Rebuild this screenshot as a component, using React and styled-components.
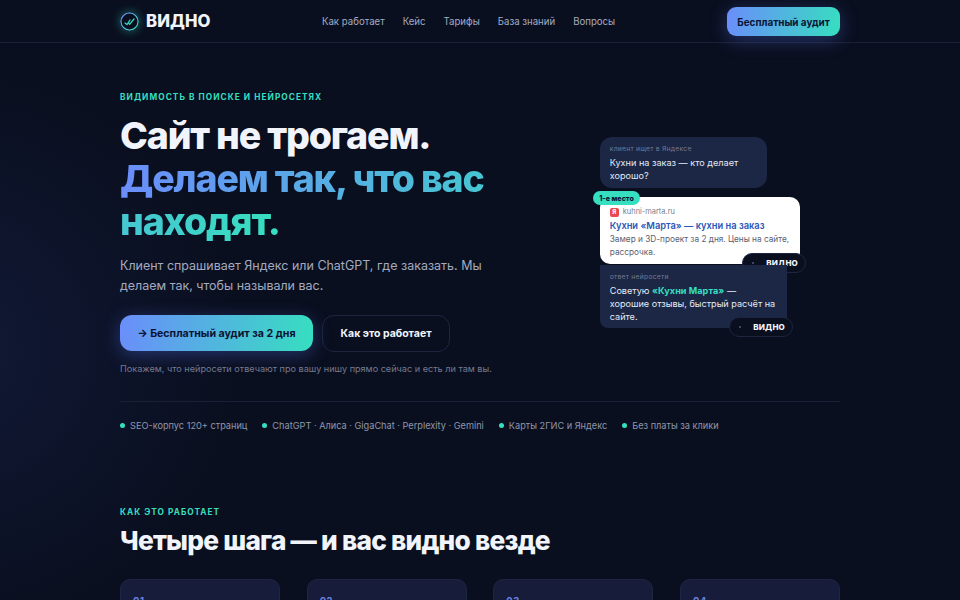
import React from 'react'
import styled, { createGlobalStyle } from 'styled-components'

const navLinks = ['Как работает', 'Кейс', 'Тарифы', 'База знаний', 'Вопросы']
const facts = ['SEO-корпус 120+ страниц', 'ChatGPT · Алиса · GigaChat · Perplexity · Gemini', 'Карты 2ГИС и Яндекс', 'Без платы за клики']
const steps = ['01', '02', '03', '04']

const Global = createGlobalStyle`
  html, body { margin: 0; height: 600px; overflow: hidden; background: #0a0f1f; }
  body { font-family: Inter, "Noto Sans", sans-serif; color: #f1f4fb; }
  * { box-sizing: border-box; }
`

const Page = styled.div`
  height: 600px;
  overflow: hidden;
  background:
    radial-gradient(300px 280px at -60px 350px, rgba(60, 90, 200, 0.14), transparent 100%),
    #0a0f1f;
`
const Wrap = styled.div`
  width: 720px;
  margin: 0 auto;
`
const HeaderBar = styled.header`
  height: 43px;
  border-bottom: 1px solid #1a2036;
`
const HeaderRow = styled(Wrap)`
  height: 42px;
  display: flex;
  align-items: center;
`
const Logo = styled.div`
  display: flex;
  align-items: center;
  gap: 7px;
  font-size: 16.7px;
  font-weight: 800;
  letter-spacing: 0.1px;
  width: 202px;
`
const LogoMark = styled.svg`
  width: 19px;
  height: 19px;
  border-radius: 50%;
  box-shadow: 0 0 10px rgba(52, 222, 195, 0.45);
`
const Nav = styled.nav`
  display: flex;
  gap: 18px;
  flex: 1;
`
const NavLink = styled.a`
  font-size: 9.65px;
  color: #a4abc0;
`
const PrimaryButton = styled.a`
  display: flex;
  align-items: center;
  justify-content: center;
  border-radius: ${p => (p.$large ? '12px' : '9px')};
  width: ${p => (p.$large ? '193px' : '113px')};
  height: ${p => (p.$large ? '36px' : '29px')};
  margin-top: ${p => (p.$large ? '0' : '1px')};
  font-size: ${p => (p.$large ? '10.65px' : '9.9px')};
  font-weight: 700;
  color: #0b1435;
  background: linear-gradient(100deg, #6b8dfb, #36dfc0);
  box-shadow: 0 4px 18px rgba(90, 120, 250, 0.35);
`
const Hero = styled(Wrap)`
  display: grid;
  grid-template-columns: 480px 240px;
  padding-top: 48px;
`
const Eyebrow = styled.div`
  padding-top: 1px;
  font-size: 8.25px;
  line-height: 11px;
  font-weight: 700;
  letter-spacing: 1.07px;
  color: #36dfc0;
`
const Title = styled.h1`
  margin: 10.5px 0 0;
  font-size: 37.5px;
  line-height: 43.1px;
  font-weight: 800;
  letter-spacing: -1.15px;
`
const GradientText = styled.span`
  background: linear-gradient(90deg, #6b8dfb, #36dfc0);
  -webkit-background-clip: text;
  background-clip: text;
  color: transparent;
`
const Lead = styled.p`
  margin: 13px 0 0;
  width: 380px;
  font-size: 12.47px;
  line-height: 20.4px;
  color: #a4abc0;
`
const Actions = styled.div`
  display: flex;
  gap: 9px;
  margin-top: 18.5px;
`
const GhostButton = styled.a`
  display: flex;
  align-items: center;
  justify-content: center;
  width: 128px;
  height: 37px;
  border: 1px solid #1e2540;
  border-radius: 12px;
  font-size: 10.5px;
  font-weight: 700;
  color: #f1f4fb;
`
const Note = styled.p`
  margin: 10px 0 0;
  font-size: 9.12px;
  line-height: 13px;
  color: #747b92;
`
const Visual = styled.div`
  display: flex;
  flex-direction: column;
  align-items: flex-start;
  padding-top: 46px;
`
const Bubble = styled.div`
  position: relative;
  background: #1b2745;
  border-radius: ${p => (p.$answer ? '0 0 8px 8px' : '12px')};
  width: ${p => (p.$answer ? '187px' : '167px')};
  height: ${p => (p.$answer ? '63px' : '51px')};
  padding: 7px 9.75px 0;
  margin-top: ${p => (p.$answer ? '1px' : '0')};
`
const BubbleLabel = styled.div`
  font-size: 6.75px;
  line-height: 10px;
  letter-spacing: 0.25px;
  color: #717a94;
`
const BubbleText = styled.div`
  margin-top: 2px;
  font-size: 9.1px;
  line-height: 13.1px;
  color: #e6eaf4;
`
const Accent = styled.b`
  color: #36dfc0;
  font-weight: 700;
  letter-spacing: 0.05px;
`
const ResultCard = styled.div`
  position: relative;
  width: 200px;
  height: 67px;
  margin-top: 9px;
  padding: 10px 9.75px 0;
  background: #fff;
  border-radius: 10px;
`
const PlaceBadge = styled.div`
  position: absolute;
  top: -6px;
  left: -7px;
  width: 47px;
  height: 14px;
  display: flex;
  align-items: center;
  justify-content: center;
  border-radius: 7px;
  background: #36dfc0;
  color: #0b1435;
  font-size: 7.1px;
  font-weight: 800;
`
const SiteRow = styled.div`
  display: flex;
  align-items: center;
  gap: 4px;
  font-size: 7.45px;
  line-height: 10px;
  color: #7a808e;
`
const YaIcon = styled.span`
  width: 9px;
  height: 9px;
  border-radius: 2px;
  background: #ea4a4f;
  color: #fff;
  font-size: 6px;
  font-weight: 700;
  display: flex;
  align-items: center;
  justify-content: center;
`
const ResultTitle = styled.div`
  margin-top: 2px;
  font-size: 9.3px;
  line-height: 13px;
  font-weight: 600;
  color: #2b57b8;
`
const ResultText = styled.div`
  margin-top: 1px;
  font-size: 8.25px;
  line-height: 12.5px;
  color: #5a6070;
`
const BrandPill = styled.div`
  position: absolute;
  right: ${p => p.$right}px;
  bottom: ${p => p.$bottom}px;
  width: 64px;
  height: 20px;
  padding: 0 7px 0 9px;
  display: flex;
  align-items: center;
  justify-content: space-between;
  background: #0a0f1f;
  border: 1px solid #1e2540;
  border-radius: 10px;
  font-size: 8px;
  font-weight: 800;
  letter-spacing: 0.2px;
  color: #f1f4fb;
`
const PillMark = styled.i`
  width: 1.5px;
  height: 1.5px;
  border-radius: 50%;
  background: #4a5270;
`
const FactRow = styled(Wrap)`
  display: flex;
  gap: 15px;
  align-items: center;
  margin-top: 26px;
  padding-top: 17px;
  border-top: 1px solid #1a2036;
`
const Fact = styled.div`
  display: flex;
  align-items: center;
  gap: 5px;
  font-size: 9.2px;
  line-height: 13px;
  color: #8f96ab;
`
const Dot = styled.i`
  width: 5px;
  height: 5px;
  border-radius: 50%;
  background: #36dfc0;
`
const Section = styled(Wrap)`
  margin-top: 74px;
`
const SectionTitle = styled.h2`
  margin: 6px 0 0;
  font-size: 26.25px;
  line-height: 34px;
  font-weight: 800;
  letter-spacing: -0.76px;
`
const Cards = styled.div`
  display: grid;
  grid-template-columns: repeat(4, 160px);
  justify-content: space-between;
  margin-top: 21px;
`
const StepCard = styled.div`
  height: 120px;
  padding: 15px 12px;
  background: #161c3a;
  border: 1px solid #1e2540;
  border-radius: 10px;
`
const StepNumber = styled.div`
  font-size: 9.4px;
  line-height: 12px;
  font-weight: 700;
  letter-spacing: 0.6px;
  color: #6b82e0;
`

const App = () => (
  <Page>
    <Global />
    <HeaderBar>
      <HeaderRow>
        <Logo>
          <LogoMark viewBox="0 0 19 19" fill="none">
            <defs>
              <linearGradient id="ring" x1="0" y1="0" x2="1" y2="1">
                <stop offset="0" stopColor="#6b8dfb" />
                <stop offset="1" stopColor="#36dfc0" />
              </linearGradient>
            </defs>
            <circle cx="9.5" cy="9.5" r="8.6" stroke="url(#ring)" strokeWidth="1.3" />
            <path d="M5 11l2 1.6L10 8" stroke="#36dfc0" strokeWidth="1.2" strokeLinecap="round" strokeLinejoin="round" />
            <path d="M8.6 11.2l1 1.2L14 7" stroke="#36dfc0" strokeWidth="1.2" strokeLinecap="round" strokeLinejoin="round" />
          </LogoMark>
          ВИДНО
        </Logo>
        <Nav>
          {navLinks.map(link => <NavLink key={link}>{link}</NavLink>)}
        </Nav>
        <PrimaryButton>Бесплатный аудит</PrimaryButton>
      </HeaderRow>
    </HeaderBar>

    <Hero>
      <div>
        <Eyebrow>ВИДИМОСТЬ В ПОИСКЕ И НЕЙРОСЕТЯХ</Eyebrow>
        <Title>
          Сайт не трогаем.<br />
          <GradientText>Делаем так, что вас<br />находят.</GradientText>
        </Title>
        <Lead>Клиент спрашивает Яндекс или ChatGPT, где заказать. Мы делаем так, чтобы называли вас.</Lead>
        <Actions>
          <PrimaryButton $large>→ Бесплатный аудит за 2 дня</PrimaryButton>
          <GhostButton>Как это работает</GhostButton>
        </Actions>
        <Note>Покажем, что нейросети отвечают про вашу нишу прямо сейчас и есть ли там вы.</Note>
      </div>
      <Visual>
        <Bubble>
          <BubbleLabel>клиент ищет в Яндексе</BubbleLabel>
          <BubbleText>Кухни на заказ — кто делает хорошо?</BubbleText>
        </Bubble>
        <ResultCard>
          <PlaceBadge>1-е место</PlaceBadge>
          <SiteRow><YaIcon>Я</YaIcon>kuhni-marta.ru</SiteRow>
          <ResultTitle>Кухни «Марта» — кухни на заказ</ResultTitle>
          <ResultText>Замер и 3D-проект за 2 дня. Цены на сайте, рассрочка.</ResultText>
          <BrandPill $right={-6} $bottom={-9}><PillMark />ВИДНО</BrandPill>
        </ResultCard>
        <Bubble $answer>
          <BubbleLabel>ответ нейросети</BubbleLabel>
          <BubbleText>Советую <Accent>«Кухни Марта»</Accent> — хорошие отзывы, быстрый расчёт на сайте.</BubbleText>
          <BrandPill $right={-6} $bottom={-9}><PillMark />ВИДНО</BrandPill>
        </Bubble>
      </Visual>
    </Hero>

    <FactRow>
      {facts.map(fact => <Fact key={fact}><Dot />{fact}</Fact>)}
    </FactRow>

    <Section>
      <Eyebrow>КАК ЭТО РАБОТАЕТ</Eyebrow>
      <SectionTitle>Четыре шага — и вас видно везде</SectionTitle>
      <Cards>
        {steps.map(step => <StepCard key={step}><StepNumber>{step}</StepNumber></StepCard>)}
      </Cards>
    </Section>
  </Page>
)

export default App
